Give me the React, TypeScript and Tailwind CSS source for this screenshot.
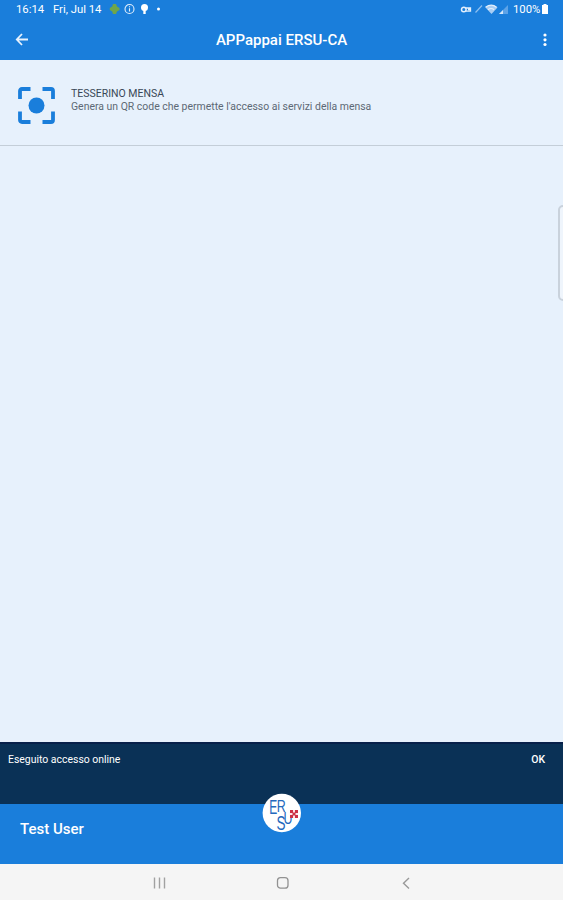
import React from 'react';

function StatusBar() {
  return (
    <div className="h-[18px] flex items-center justify-between pl-4 pr-[14px] text-[11.3px] leading-[18px]">
      <div className="flex items-center">
        <span className="w-[37px] pt-px">16:14</span>
        <span className="w-[56px] pt-px whitespace-nowrap">Fri, Jul 14</span>
        <svg width="56" height="12" viewBox="0 0 56 12">
          <path d="M4 1h3l1 2.500 2.500 1.500v2L8 8.500 7 11H4L3.200 8.500.8 7V5l2.400-1.500z" fill="#6fa54a" />
          <circle cx="20.500" cy="6" r="4.500" fill="none" stroke="#e3effc" strokeWidth="1.100" />
          <path d="M20.500 5.300v3.200M20.500 3.300v1" stroke="#e3effc" strokeWidth="1.100" />
          <circle cx="35.500" cy="4.500" r="3.500" fill="#fff" />
          <path d="M34.300 7h2.400v4h-2.400z" fill="#fff" />
          <circle cx="49.500" cy="6" r="1.500" fill="#fff" />
        </svg>
      </div>
      <div className="flex items-center">
        <svg width="53" height="12" viewBox="0 0 53 12" fill="none">
          <circle cx="3.800" cy="6.500" r="2.300" stroke="#e3effc" strokeWidth="1.500" />
          <path d="M6 5h4.500v3.200H6M8 6.500h2" stroke="#e3effc" strokeWidth="1.300" />
          <path d="M15.500 9.500l6.500-7" stroke="#8fc0f0" strokeWidth="1.200" />
          <path d="M25.500 4.500q6-4.800 12 0L31.500 11z" fill="#a9cef4" />
          <path d="M25.500 4.300q6-4.500 11 0M28 6.800q3.300-2.600 6 0" stroke="#e3effc" strokeWidth="1.200" />
          <path d="M48 2v9h-9z" fill="#5da3e8" />
          <path d="M43 7v4h-4z" fill="#d5e7fa" />
        </svg>
        <span className="w-[28px] pt-px">100%</span>
        <svg width="8" height="12" viewBox="0 0 8 12">
          <path d="M2.500 1h3v1H7v9H1V2h1.500z" fill="#fff" />
        </svg>
      </div>
    </div>
  );
}

function AppBar() {
  return (
    <div className="h-[42px] grid grid-cols-[60px_1fr_60px] items-center">
      <svg className="ml-[15px]" width="14" height="14" viewBox="0 0 14 14" fill="none">
        <path d="M7 2L1.800 7.500 7 13M1.800 7.500H13" stroke="#e8f2fd" strokeWidth="1.800" />
      </svg>
      <h1 className="text-center text-[15px] leading-[18px] pt-px font-medium">APPappai ERSU-CA</h1>
      <svg className="justify-self-end mr-4" width="4" height="16" viewBox="0 0 4 16" fill="#fff">
        <circle cx="2" cy="4" r="1.600" />
        <circle cx="2" cy="8.800" r="1.600" />
        <circle cx="2" cy="13.500" r="1.600" />
      </svg>
    </div>
  );
}

function MenuItem() {
  return (
    <div className="h-[86px] flex items-start pl-[18px] border-b border-[#c4ced8]">
      <svg className="mt-[27px] shrink-0" width="37" height="37" viewBox="0 0 37 37" fill="none">
        <path
          d="M2 12V4q0-2 2-2h8.500M24.500 2H33q2 0 2 2v8M35 24.500V33q0 2-2 2h-8.500M12.500 35H4q-2 0-2-2v-8.500"
          stroke="#1a7edb"
          strokeWidth="3.800"
        />
        <circle cx="18.500" cy="18.500" r="8" fill="#1a7edb" />
      </svg>
      <div className="ml-4 mt-[27px] whitespace-nowrap">
        <div className="text-[10.5px] leading-[13px] text-[#394756]">TESSERINO MENSA</div>
        <div className="text-[10.450px] leading-[13px] text-[#5d6975]">
          Genera un QR code che permette l'accesso ai servizi della mensa
        </div>
      </div>
    </div>
  );
}

function Logo() {
  return (
    <svg className="absolute left-[262px] -top-3 overflow-visible" width="40" height="41" viewBox="0 0 40 41">
      <circle cx="19.800" cy="21" r="19.200" fill="#fff" />
      <text className="font-['Liberation_Sans',sans-serif]" fill="#2468bd">
        <tspan x="7.300" y="21.500" fontSize="21" textLength="8" lengthAdjust="spacingAndGlyphs">E</tspan>
        <tspan x="14.800" y="19.500" fontSize="17" textLength="9" lengthAdjust="spacingAndGlyphs">R</tspan>
        <tspan x="14.500" y="38" fontSize="20" textLength="9" lengthAdjust="spacingAndGlyphs">S</tspan>
        <tspan x="21.500" y="31.500" fontSize="16" textLength="9" lengthAdjust="spacingAndGlyphs">U</tspan>
      </text>
      <path d="M28 18h8v8h-8z" fill="#fbe3e6" />
      <path d="M28 18h3v3h-3zM33 18h3v3h-3zM28 23h3v3h-3zM33 23h3v3h-3zM30.500 20.500h3v3h-3z" fill="#cc3044" />
    </svg>
  );
}

function NavBar() {
  return (
    <div className="h-9 bg-[#f5f5f5] grid grid-cols-[152px_124px_121px_1fr] items-center">
      <span />
      <svg width="15" height="14" viewBox="0 0 15 14" fill="none" stroke="#a1a1a1" strokeWidth="1.400">
        <path d="M2.500 2.500v11M7.500 2.500v11M12.500 2.500v11" />
      </svg>
      <svg width="14" height="14" viewBox="0 0 14 14" fill="none" stroke="#929292" strokeWidth="1.300">
        <rect x="1.500" y="2.700" width="10.500" height="10.500" rx="3" />
      </svg>
      <svg width="16" height="14" viewBox="0 0 16 14" fill="none" stroke="#999" strokeWidth="1.400">
        <path d="M12 3L6.500 8.200 12 13.500" />
      </svg>
    </div>
  );
}

export default function App() {
  return (
    <div className="relative w-[563px] h-[900px] flex flex-col overflow-hidden bg-[#e7f1fc] font-['Roboto',sans-serif]">
      <header className="h-[60px] shrink-0 bg-[#1a7edb] text-white">
        <StatusBar />
        <AppBar />
      </header>
      <main className="flex-1">
        <MenuItem />
      </main>
      <div className="h-[62px] shrink-0 flex justify-between items-start px-2 pt-[9px] bg-[#0a3156] border-t-2 border-[#08204a] text-white text-[10.450px] leading-[14px]">
        <span>Eseguito accesso online</span>
        <span className="mr-[10px] font-medium">OK</span>
      </div>
      <footer className="relative h-[60px] shrink-0 bg-[#1a7edb] text-white">
        <div className="pl-5 pt-4 text-[15px] leading-[18px] font-medium">Test User</div>
        <Logo />
      </footer>
      <NavBar />
      {/* edge panel handle */}
      <div className="absolute left-[558px] top-[205px] w-3 h-[96px] rounded-[5px] border-2 border-[#c9d2dc] bg-[#eff5fc]" />
    </div>
  );
}
